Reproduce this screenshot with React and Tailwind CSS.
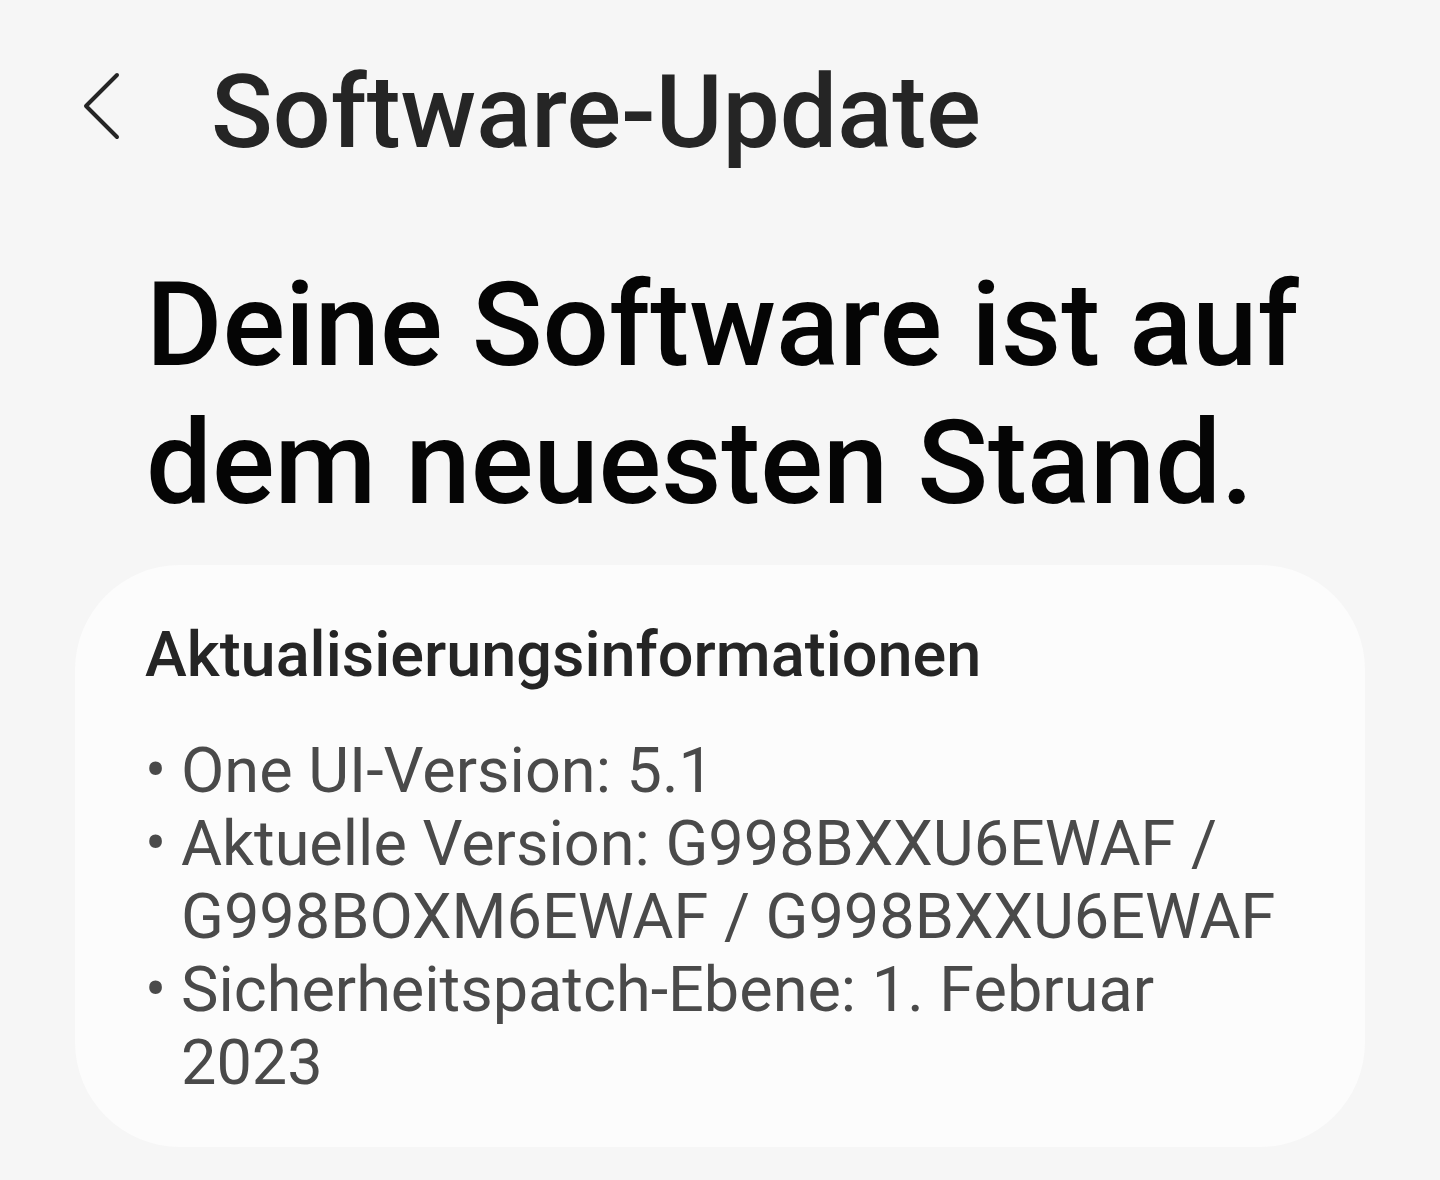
import React from "react";

const items = [
  ["One UI-Version: 5.1"],
  ["Aktuelle Version: G998BXXU6EWAF /", "G998BOXM6EWAF / G998BXXU6EWAF"],
  ["Sicherheitspatch-Ebene: 1. Februar", "2023"],
];

export default function App() {
  return (
    <div className="w-[1440px] h-[1180px] overflow-hidden bg-[#f6f6f6] font-['Roboto',sans-serif]">
      {/* Header */}
      <div className="flex items-start pl-[80px] pt-[60px]">
        <svg
          className="mt-[10px] w-[44px] h-[72px] shrink-0"
          viewBox="0 0 44 72"
          fill="none"
          stroke="#252525"
          strokeWidth="4"
          strokeLinecap="round"
          strokeLinejoin="round"
        >
          <path d="M37 5 L6 36 L37 67" />
        </svg>
        <h1 className="ml-[87px] text-[102px] leading-[104px] font-medium text-[#252525]">
          Software-Update
        </h1>
      </div>

      {/* Status */}
      <h2 className="mt-[92px] pl-[146px] text-[117px] leading-[138px] font-medium text-[#050505]">
        Deine Software ist auf
        <br />
        dem neuesten Stand.
      </h2>

      {/* Info card */}
      <div className="mt-[33px] ml-[75px] w-[1290px] h-[582px] rounded-[105px] bg-[#fcfcfc] pl-[70px] pt-[53px]">
        <h3 className="text-[63px] leading-[74px] font-medium text-[#252525]">
          Aktualisierungsinformationen
        </h3>
        <ul className="mt-[42px] text-[63px] leading-[73px] text-[#4a4a4a]">
          {items.map((lines, i) => (
            <li key={i} className="flex">
              <span className="w-[36px] shrink-0">•</span>
              <span>
                {lines.map((l, j) => (
                  <React.Fragment key={j}>
                    {j > 0 && <br />}
                    {l}
                  </React.Fragment>
                ))}
              </span>
            </li>
          ))}
        </ul>
      </div>
    </div>
  );
}
